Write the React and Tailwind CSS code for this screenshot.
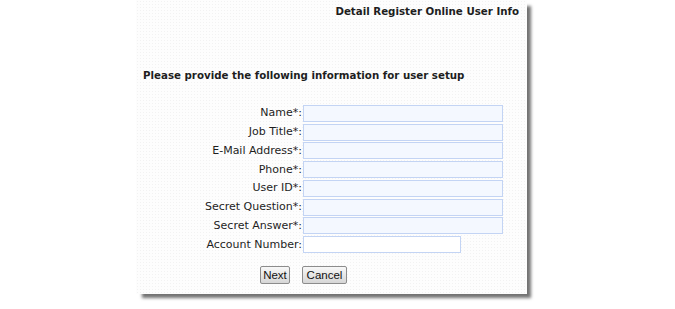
import React from 'react';

const fields = [
    { label: 'Name*:', wide: true },
    { label: 'Job Title*:', wide: true },
    { label: 'E-Mail Address*:', wide: true },
    { label: 'Phone*:', wide: true },
    { label: 'User ID*:', wide: true },
    { label: 'Secret Question*:', wide: true },
    { label: 'Secret Answer*:', wide: true },
    { label: 'Account Number:', wide: false },
];

const App = () => {
    return (
        <div className="min-h-screen bg-white font-['DejaVu_Sans',sans-serif] text-[#1e1e1e]">
            <div className="ml-[136px] w-[391px] h-[294px] bg-[#fdfdfd] bg-[radial-gradient(#f2f2f2_0.6px,transparent_0.7px)] bg-[size:3px_3px] shadow-[5px_5px_3px_-1px_rgba(0,0,0,0.55)]">
                <div className="flex justify-end pr-[8px] pt-[4px] h-[18px] text-[10.25px] font-bold leading-[14px]">
                    Detail Register Online User Info
                </div>
                <div className="pl-[7px] pt-[50px] text-[10.25px] font-bold leading-[14px]">
                    Please provide the following information for user setup
                </div>
                <div className="mt-[22px] flex flex-col">
                    {fields.map((f) => (
                        <div key={f.label} className="flex items-center h-[18.75px]">
                            <label className="w-[167px] text-right text-[11px] leading-[14px] pr-[1px]">{f.label}</label>
                            <input
                                type="text"
                                className={`h-[17px] border border-[#c3d4f4] outline-none ${f.wide ? 'w-[200px] bg-[#f4f8ff]' : 'w-[158px] bg-white'}`}
                            />
                        </div>
                    ))}
                </div>
                <div className="mt-[12px] flex gap-[12px] pl-[124px]">
                    <button className="h-[18px] w-[30px] rounded-[2px] border border-[#8c8c8c] bg-gradient-to-b from-[#f8f8f8] to-[#d6d6d6] font-['Liberation_Sans',sans-serif] text-[11.5px] leading-[16px] text-[#111]">
                        Next
                    </button>
                    <button className="h-[18px] w-[45px] rounded-[2px] border border-[#8c8c8c] bg-gradient-to-b from-[#f8f8f8] to-[#d6d6d6] font-['Liberation_Sans',sans-serif] text-[11.5px] leading-[16px] text-[#111]">
                        Cancel
                    </button>
                </div>
            </div>
        </div>
    );
};

export default App;
